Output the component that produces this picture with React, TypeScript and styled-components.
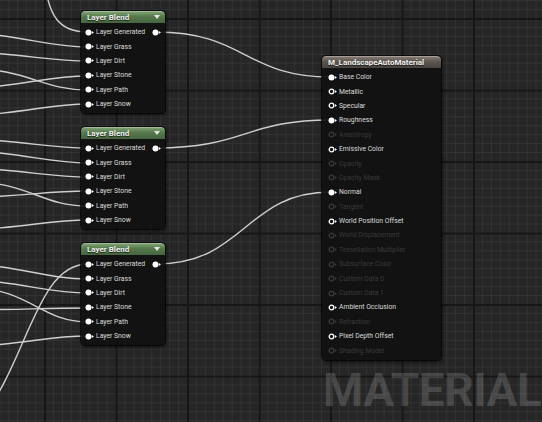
import styled, { createGlobalStyle } from "styled-components";

// TYPES
type PinState = "linked" | "open" | "off";

interface NodePos {
  x: number;
  y: number;
  w: number;
}

// DATA
const blendInputs = ["Layer Generated", "Layer Grass", "Layer Dirt", "Layer Stone", "Layer Path", "Layer Snow"];

const materialInputs: [string, PinState][] = [
  ["Base Color", "linked"],
  ["Metallic", "open"],
  ["Specular", "open"],
  ["Roughness", "linked"],
  ["Anisotropy", "off"],
  ["Emissive Color", "open"],
  ["Opacity", "off"],
  ["Opacity Mask", "off"],
  ["Normal", "linked"],
  ["Tangent", "off"],
  ["World Position Offset", "open"],
  ["World Displacement", "off"],
  ["Tessellation Multiplier", "off"],
  ["Subsurface Color", "off"],
  ["Custom Data 0", "off"],
  ["Custom Data 1", "off"],
  ["Ambient Occlusion", "open"],
  ["Refraction", "off"],
  ["Pixel Depth Offset", "open"],
  ["Shading Model", "off"],
];

const blendNodes: NodePos[] = [
  { x: 81, y: 11, w: 84 },
  { x: 81, y: 127, w: 84 },
  { x: 81, y: 243, w: 84 },
];

// wires running from nodes off to the left
const incoming = [
  "M 44 -24 C 48 18, 60 32, 88 32",
  "M -60 32 C 20 32, 40 47, 88 47",
  "M -80 51 C 20 51, 40 61, 88 61",
  "M -60 89 C 20 89, 40 76, 88 76",
  "M -40 68 C 30 68, 40 90, 88 90",
  "M -80 117 C 20 117, 40 104, 88 104",

  "M -80 138 C 20 138, 40 148, 88 148",
  "M -80 149 C 20 149, 40 163, 88 163",
  "M -80 167 C 20 167, 40 177, 88 177",
  "M -60 198 C 20 198, 40 191, 88 191",
  "M -30 182 C 30 182, 40 206, 88 206",
  "M -80 231 C 20 231, 40 220, 88 220",

  "M -20 420 C 28 362, 36 264, 88 264",
  "M -60 263 C 20 263, 40 279, 88 279",
  "M -60 279 C 20 279, 40 293, 88 293",
  "M -50 310 C 20 310, 40 308, 88 308",
  "M -30 288 C 30 288, 40 322, 88 322",
  "M -60 347 C 20 347, 40 336, 88 336",
];

const outgoing = [
  "M 156 32 C 245 32, 245 77, 331 77",
  "M 156 148 C 245 148, 245 120, 331 120",
  "M 156 264 C 245 264, 245 192, 331 192",
];

// CSS COMPONENTS
const GlobalStyle = createGlobalStyle`
  html, body {
    margin: 0;
    padding: 0;
    background: #262626;
  }
`;

const Canvas = styled.div`
  position: relative;
  width: 542px;
  height: 422px;
  overflow: hidden;
  font-family: Roboto, "Liberation Sans", sans-serif;
  background-color: #262626;
  background-image:
    linear-gradient(to right, #161616 1.5px, transparent 1.5px),
    linear-gradient(to bottom, #161616 1.5px, transparent 1.5px),
    linear-gradient(to right, #333333 1px, transparent 1px),
    linear-gradient(to bottom, #333333 1px, transparent 1px);
  background-size: 71.5px 71.5px, 71.5px 71.5px, 8.9375px 8.9375px, 8.9375px 8.9375px;
  background-position: 44px 18px, 44px 18px, 44px 18px, 44px 18px;
`;

const WireLayer = styled.svg`
  position: absolute;
  inset: 0;
  width: 542px;
  height: 422px;

  path {
    fill: none;
    stroke: #cfcfcf;
    stroke-width: 1.4;
  }
`;

const Watermark = styled.div`
  position: absolute;
  left: 323px;
  top: 367px;
  font-size: 46px;
  line-height: 1;
  font-weight: 700;
  letter-spacing: -0.5px;
  color: rgba(255, 255, 255, 0.16);
`;

const Node = styled.div<{ $x: number; $y: number; $w: number }>`
  position: absolute;
  left: ${(p) => p.$x}px;
  top: ${(p) => p.$y}px;
  width: ${(p) => p.$w}px;
  border-radius: 4px;
  background: rgba(16, 17, 16, 0.94);
  box-shadow: 0 0 0 1px rgba(0, 0, 0, 0.7), 1px 2px 4px rgba(0, 0, 0, 0.6);
  padding-bottom: 2px;
  overflow: hidden;
`;

const NodeHeader = styled.header<{ $kind: "blend" | "material" }>`
  height: 12px;
  display: flex;
  align-items: center;
  justify-content: space-between;
  padding: 0 5px 0 6px;
  margin-bottom: 2px;
  border-radius: 4px 4px 0 0;
  background: ${(p) =>
    p.$kind === "blend"
      ? "linear-gradient(#86a97a, #577a4c 45%, #466540)"
      : "linear-gradient(#8a8079, #5e5650 45%, #4a433e)"};
  box-shadow: inset 0 1px 0 rgba(255, 255, 255, 0.25);

  span {
    font-size: 8px;
    font-weight: 700;
    color: #f2f2f2;
    text-shadow: 0 1px 1px rgba(0, 0, 0, 0.8);
    white-space: nowrap;
  }
`;

const PinRow = styled.div<{ $dim?: boolean; $pad: number }>`
  height: 14.4px;
  display: flex;
  align-items: center;
  gap: 2px;
  padding: 0 4px 0 ${(p) => p.$pad}px;
  font-size: 6.8px;
  white-space: nowrap;
  color: ${(p) => (p.$dim ? "#3b3b3b" : "#dedede")};

  svg {
    flex: none;
  }
`;

const Output = styled.span`
  margin-left: auto;
  display: flex;
`;

const Pin = ({ state }: { state: PinState }) => {
  const color = state === "off" ? "#3a3a3a" : "#ffffff";
  return (
    <svg width="9" height="7" viewBox="0 0 9 7">
      {state === "linked" ? (
        <circle cx="3.5" cy="3.5" r="3" fill={color} />
      ) : (
        <circle cx="3.5" cy="3.5" r="2.3" fill="none" stroke={color} strokeWidth="1.3" />
      )}
      <polygon points="6.9,1.9 8.9,3.5 6.9,5.1" fill={color} />
    </svg>
  );
};

const DropArrow = () => (
  <svg width="6" height="4" viewBox="0 0 6 4">
    <polygon points="0,0 6,0 3,4" fill="#e6e6e6" />
  </svg>
);

const LayerBlendNode = ({ pos }: { pos: NodePos }) => (
  <Node $x={pos.x} $y={pos.y} $w={pos.w}>
    <NodeHeader $kind="blend">
      <span>Layer Blend</span>
      <DropArrow />
    </NodeHeader>
    {blendInputs.map((label, i) => (
      <PinRow key={label} $pad={4}>
        <Pin state="linked" />
        <span>{label}</span>
        {i === 0 && (
          <Output>
            <Pin state="linked" />
          </Output>
        )}
      </PinRow>
    ))}
  </Node>
);

const MaterialNode = () => (
  <Node $x={322} $y={56} $w={119}>
    <NodeHeader $kind="material">
      <span>M_LandscapeAutoMaterial</span>
    </NodeHeader>
    {materialInputs.map(([label, state]) => (
      <PinRow key={label} $pad={6} $dim={state === "off"}>
        <Pin state={state} />
        <span>{label}</span>
      </PinRow>
    ))}
  </Node>
);

export default function App() {
  return (
    <>
      <GlobalStyle />
      <Canvas>
        <Watermark>MATERIAL</Watermark>
        <WireLayer viewBox="0 0 542 422">
          {incoming.map((d) => (
            <path key={d} d={d} />
          ))}
          {outgoing.map((d) => (
            <path key={d} d={d} />
          ))}
        </WireLayer>
        {blendNodes.map((pos) => (
          <LayerBlendNode key={pos.y} pos={pos} />
        ))}
        <MaterialNode />
      </Canvas>
    </>
  );
}
